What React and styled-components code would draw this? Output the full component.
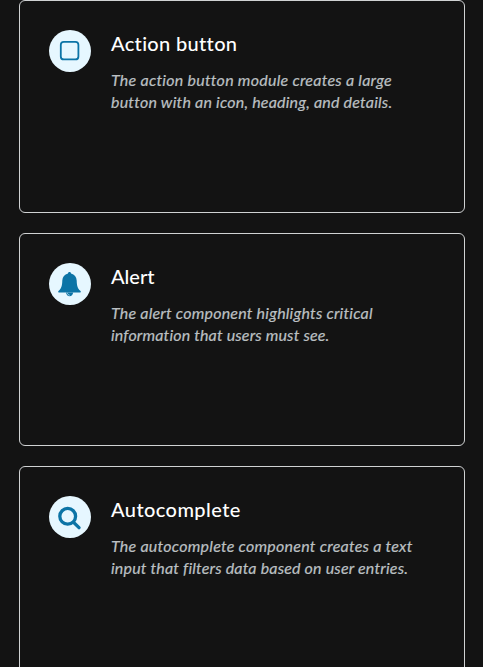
import React from 'react';
import styled, { createGlobalStyle } from 'styled-components';

const GlobalStyle = createGlobalStyle`
  * { box-sizing: border-box; }
  html { background: #131313; overflow: hidden; }
  body { margin: 0; height: 100vh; overflow: hidden; background: #131313; }
`;

const CardList = styled.main`
  display: flex;
  flex-direction: column;
  gap: 20px;
  padding: 0 18px 0 19px;
  font-family: Lato, 'Noto Sans', sans-serif;
`;

const Card = styled.article`
  display: flex;
  gap: 20px;
  height: 213px;
  padding: 29px;
  border: 1px solid #d0d2d3;
  border-radius: 6px;
`;

const IconCircle = styled.div`
  display: flex;
  flex: none;
  width: 42px;
  height: 42px;
  border-radius: 50%;
  background: #e6f7ff;
  color: #0c74a6;
`;

const Body = styled.div`
  flex: 1;
  min-width: 0;
`;

const Title = styled.h2`
  margin: 0;
  color: #fff;
  font-size: 20px;
  font-weight: 500;
  line-height: 26px;
  white-space: nowrap;
  font-variant-ligatures: none;
  letter-spacing: ${(p) => p.$tracking};
`;

const Description = styled.p`
  margin: 13px 0 0;
  color: #bcc0c3;
  font-size: 16px;
  font-style: italic;
  line-height: 22px;
  -webkit-text-stroke: 0.2px currentColor;
`;

const Line = styled.span`
  display: block;
  width: max-content;
  white-space: nowrap;
  letter-spacing: ${(p) => p.$tracking};
`;

const SquareIcon = () => (
  <svg width="42" height="42" viewBox="0 0 42 42" fill="none">
    <rect x="11.8" y="11.8" width="17.6" height="17.6" rx="3" stroke="currentColor" strokeWidth="1.8" />
  </svg>
);

const BellIcon = () => (
  <svg width="42" height="42" viewBox="0 0 42 42" fill="currentColor">
    <path d="M20.500 9c-.9 0-1.500.7-1.500 1.600C15.500 11.400 13.500 14 13.300 17.400c-.1 5.200-1 8.200-3.600 10.300-.9.700-.5 1.900.6 1.900h20.400c1.100 0 1.500-1.200.6-1.900-2.600-2.100-3.500-5.100-3.600-10.300-.2-3.400-2.200-6-5.700-6.800C22 9.700 21.400 9 20.500 9z" />
    <path d="M17 29.500h7.200c-.3 2.200-1.700 3.800-3.600 3.800S17.300 31.700 17 29.500z" />
    <path d="M18.300 30.200c.2 1 .9 1.700 2 1.900" fill="none" stroke="#e6f7ff" strokeWidth=".7" strokeLinecap="round" />
  </svg>
);

const SearchIcon = () => (
  <svg width="42" height="42" viewBox="0 0 42 42" fill="none" stroke="currentColor" strokeLinecap="round">
    <circle cx="18.700" cy="20.300" r="7.900" strokeWidth="3.300" />
    <path d="M24.600 26.400l5.400 5.200" strokeWidth="3.400" />
  </svg>
);

const cards = [
  {
    title: 'Action button',
    Icon: SquareIcon,
    tracking: '0.33px',
    lines: [
      ['The action button module creates a large', '0.245px'],
      ['button with an icon, heading, and details.', '0.2px'],
    ],
  },
  {
    title: 'Alert',
    Icon: BellIcon,
    tracking: '0px',
    lines: [
      ['The alert component highlights critical', '0.205px'],
      ['information that users must see.', '0.16px'],
    ],
  },
  {
    title: 'Autocomplete',
    Icon: SearchIcon,
    tracking: '0.42px',
    lines: [
      ['The autocomplete component creates a text', '0.24px'],
      ['input that filters data based on user entries.', '0.18px'],
    ],
  },
];

export default function App() {
  return (
    <>
      <GlobalStyle />
      <CardList>
        {cards.map(({ title, Icon, tracking, lines }) => (
          <Card key={title}>
            <IconCircle><Icon /></IconCircle>
            <Body>
              <Title $tracking={tracking}>{title}</Title>
              <Description>
                {lines.map(([text, spacing]) => (
                  <Line key={text} $tracking={spacing}>{text} </Line>
                ))}
              </Description>
            </Body>
          </Card>
        ))}
      </CardList>
    </>
  );
}
